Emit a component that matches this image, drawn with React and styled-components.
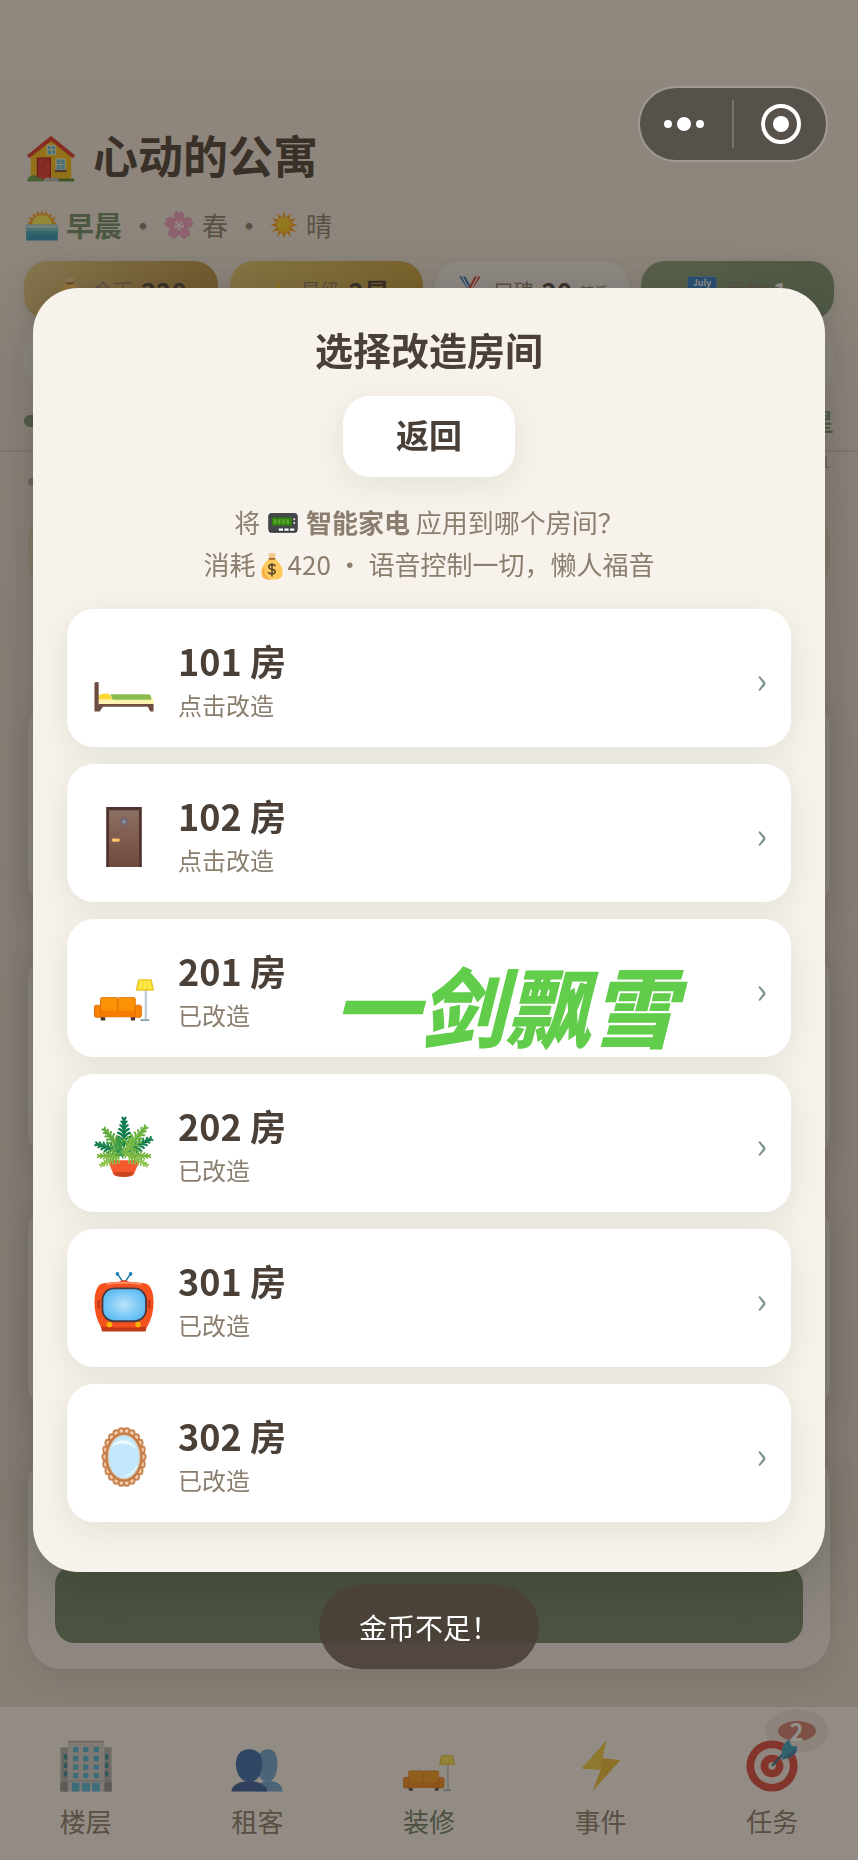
import React from 'react'
import styled, { createGlobalStyle, css } from 'styled-components'

const rooms = [
  { name: '101 房', status: '点击改造', icon: 'bed' },
  { name: '102 房', status: '点击改造', icon: 'door' },
  { name: '201 房', status: '已改造', icon: 'sofa', mark: '一剑飘雪' },
  { name: '202 房', status: '已改造', icon: 'plant' },
  { name: '301 房', status: '已改造', icon: 'tv' },
  { name: '302 房', status: '已改造', icon: 'mirror' },
]

const stats = [
  { icon: 'money', label: '金币', value: '320', tone: 'gold' },
  { icon: 'star', label: '星级', value: '2星', tone: 'yellow' },
  { icon: 'medal', label: '口碑', value: '20', note: '较低', tone: 'white' },
  { icon: 'calendar', label: '周数', value: '1', tone: 'green' },
]

const tabs = [
  { icon: 'building', label: '楼层' },
  { icon: 'people', label: '租客' },
  { icon: 'sofa', label: '装修', active: true },
  { icon: 'bolt', label: '事件' },
  { icon: 'target', label: '任务', badge: 2 },
]

/**
 * Icons
 */

const range = (n) => Array.from({ length: n }, (_, i) => i)

// one fern leaf, growing upwards from 0,0
const Frond = ({ x, y, angle, size, color }) => (
  <g
    transform={`translate(${x} ${y}) rotate(${angle}) scale(${size})`}
    stroke={color}
    strokeLinecap="round"
    fill="none"
  >
    <path d="M0 0V-54" strokeWidth="3" />
    {range(7).map((i) => (
      <path
        key={i}
        d={`M${i * 2 - 15} ${-14 - i * 7}Q${i - 7} ${-13 - i * 7} 0 ${-5 - i * 7}Q${7 - i} ${-13 - i * 7} ${15 - i * 2} ${-14 - i * 7}`}
        strokeWidth="4"
      />
    ))}
  </g>
)

const drawings = {
  house: (
    <>
      <path d="M10 56 64 12l54 44v66H10z" fill="#fcc21b" />
      <path d="M64 2 0 54l6 8 58-46 58 46 6-8z" fill="#e53b2e" />
      <path d="M26 60h38v60H26z" fill="#b71c1c" />
      <path d="M30 64h30v56H30z" fill="#e53935" />
      <circle cx="56" cy="86" r="2" fill="#fcc21b" />
      <path d="M52 26h26v28H52z" fill="#fff3b0" />
      <path d="M55 29h9v9h-9zM67 29h8v9h-8zM55 41h9v10h-9zM67 41h8v10h-8z" fill="#5fc3e8" />
      <path d="M76 62h28v32H76z" fill="#fff3b0" />
      <path d="M79 65h10v12H79zM91 65h10v12H91zM79 80h10v12H79zM91 80h10v12H91z" fill="#5fc3e8" />
      <path d="M74 93h32v6H74z" fill="#795548" />
      <path d="M1 124c0-16 14-22 28-12 10 2 14 6 16 12z" fill="#6aa34d" />
      <path d="M48 114h34l6 10H42z" fill="#bdbdbd" />
      <path d="M82 116h44v8H86z" fill="#558b2f" />
    </>
  ),
  sunrise: (
    <>
      <path d="M64 4l7 18 13-15 2 20 17-10-4 19 20-3-11 17 18 3-14 12H16L4 53l17-3L9 33l20 3-4-19 17 10 2-20 13 15z" fill="#f9a825" />
      <path d="M22 66a42 42 0 0184 0z" fill="#ffee58" />
      <path d="M1 62h126v64H1z" fill="#2698bd" />
      <path d="M1 62h126v14H1z" fill="#b9e0dd" />
      <path d="M1 76h126v14H1z" fill="#6fc7d0" />
      <path d="M1 90h126v14H1z" fill="#3faac6" />
    </>
  ),
  blossom: (
    <>
      {range(5).map((i) => (
        <path
          key={i}
          transform={`rotate(${i * 72} 64 66)`}
          d="M64 64C36 42 38 14 56 5l8 8 8-8c18 9 20 37-8 59z"
          fill="#f5a3c7"
          stroke="#e48bb5"
          strokeWidth="2"
        />
      ))}
      <circle cx="64" cy="66" r="22" fill="#fbd8e8" />
      <path d="M64 66V38M64 66l27-9M64 66l17 23M64 66 47 89M64 66l-27-9" stroke="#f06292" strokeWidth="3" />
      <circle cx="64" cy="66" r="9" fill="#fff0f6" />
    </>
  ),
  sun: (
    <>
      {range(12).map((i) => (
        <path key={i} transform={`rotate(${i * 30} 64 64)`} d="M54 34 64 0l10 34z" fill="#f9a01b" />
      ))}
      <circle cx="64" cy="64" r="35" fill="#fcc21b" />
      <circle cx="60" cy="58" r="27" fill="#ffd429" />
    </>
  ),
  money: (
    <>
      <path d="M46 6c6 5 12-5 18 0s12-5 18 0l-6 26H52z" fill="#f5c98a" />
      <path d="M50 32h28c30 24 40 52 32 76-6 16-22 18-46 18s-40-2-46-18c-8-24 2-52 32-76z" fill="#ffca5c" />
      <path d="M30 62c-12 20-14 42-6 52 8 10 24 12 40 12-24-8-40-28-34-64z" fill="#f7ad48" />
      <path d="M49 27h30v9H49z" fill="#a5722d" />
      <path d="M80 64c-6-8-30-10-31 4 0 14 31 8 30 22-2 14-28 12-33 2M64 50v62" stroke="#5d4a2e" strokeWidth="7" fill="none" />
    </>
  ),
  star: <path d="M64 14l9 42 48 0-37 29 10 41-30-23-30 23 10-41L7 56h48z" fill="#f5c518" />,
  medal: (
    <>
      <path d="M18 2h26l32 58H56z" fill="#2f7cc0" />
      <path d="M28 2h6l30 56h-6z" fill="#fff" />
      <path d="M110 2H84L52 60h20z" fill="#d6452f" />
      <path d="M100 2h-6L66 56h6z" fill="#fff" />
      <circle cx="64" cy="90" r="34" fill="#fcc21b" />
    </>
  ),
  calendar: (
    <>
      <rect x="2" y="2" width="124" height="124" rx="10" fill="#eceff1" />
      <path d="M12 2h104q10 0 10 10v44H2V12Q2 2 12 2z" fill="#2a80d2" />
      <text x="64" y="42" fontSize="38" fontWeight="700" textAnchor="middle" fill="#fff">
        July
      </text>
    </>
  ),
  pager: (
    <>
      <rect x="2" y="22" width="124" height="84" rx="14" fill="#2c2d2f" />
      <rect x="2" y="22" width="124" height="78" rx="14" fill="#434649" />
      <path d="M16 40h86v36H16z" fill="#2f7d12" />
      <path d="M24 48h12v20H24zM42 48h12v20H42zM60 48h12v20H60zM78 48h12v20H78z" fill="#57a62b" />
      <path d="M46 87h18v10H46zM70 87h18v10H70zM94 87h18v10H94z" fill="#fff" />
      <circle cx="112" cy="48" r="4" fill="#eee" />
      <circle cx="112" cy="64" r="4" fill="#eee" />
    </>
  ),
  bed: (
    <>
      <path d="M10 98h117v14H10z" fill="#fff3b0" />
      <path d="M10 92q14-6 24-1l6 10H10z" fill="#fdd835" />
      <path d="M35 90h80q7 0 7 7v5H40z" fill="#8bbd4e" />
      <path d="M10 111h116v6H10z" fill="#6d4c41" />
      <path d="M1 67q0-3 5-3t4 3v46h9v4l-7 10H1z" fill="#6d4c41" />
      <path d="M117 111h10v16h-7l-5-10z" fill="#6d4c41" />
    </>
  ),
  door: (
    <>
      <defs>
        <linearGradient id="doorPanel" x2="0" y2="1">
          <stop stopColor="#8d6e63" />
          <stop offset="1" stopColor="#6f4a3c" />
        </linearGradient>
      </defs>
      <path d="M26 0h76v128H26z" fill="#4e342e" />
      <path d="M32 7h64v121H32z" fill="url(#doorPanel)" />
      <circle cx="64" cy="31" r="9" fill="#79646a" />
      <circle cx="64" cy="31" r="4" fill="#8296aa" />
      <rect x="38" y="67" width="17" height="7" rx="3" fill="#ffc46b" />
    </>
  ),
  sofa: (
    <>
      <path d="M108 58h5v66h-5z" fill="#c3ccd1" />
      <path d="M99 122h19v4H99z" fill="#90a4ae" />
      <path d="M95 38h27l5 22H90z" fill="#fbe12f" stroke="#e0b62a" strokeWidth="2" />
      <path d="M102 41l-3 16M109 41v16M116 41l3 16" stroke="#fff176" strokeWidth="2" />
      <path d="M13 116h11v9H15zM78 116h11l-2 9h-8z" fill="#4e342e" />
      <rect x="14" y="76" width="37" height="34" rx="3" fill="#fb9104" stroke="#e06f00" strokeWidth="2" />
      <rect x="51" y="76" width="37" height="34" rx="3" fill="#fb9104" stroke="#e06f00" strokeWidth="2" />
      <path d="M12 104h78v14H12z" fill="#f57c00" />
      <rect x="1" y="92" width="13" height="26" rx="4" fill="#f78204" stroke="#e06f00" strokeWidth="2" />
      <rect x="88" y="92" width="13" height="26" rx="4" fill="#f78204" stroke="#e06f00" strokeWidth="2" />
    </>
  ),
  plant: (
    <>
      <Frond x={64} y={66} angle={0} size={1.15} color="#0c7a4c" />
      <Frond x={62} y={76} angle={-72} size={1.1} color="#16804f" />
      <Frond x={66} y={76} angle={62} size={1.15} color="#16804f" />
      <Frond x={60} y={72} angle={-40} size={1.1} color="#5daa3c" />
      <Frond x={68} y={72} angle={40} size={1.2} color="#6cb33f" />
      <path d="M30 92h68l-14 32q-20 6-42 0z" fill="#f4582c" />
      <path d="M42 118h42l-5 8q-16 4-32 0z" fill="#c94421" />
      <Frond x={58} y={80} angle={-118} size={0.9} color="#8bc34a" />
      <Frond x={70} y={80} angle={118} size={0.9} color="#8bc34a" />
      <Frond x={58} y={80} angle={-94} size={0.9} color="#76b53f" />
      <Frond x={70} y={80} angle={94} size={0.9} color="#76b53f" />
      <Frond x={62} y={88} angle={-14} size={0.8} color="#3b9a45" />
      <Frond x={66} y={88} angle={18} size={0.8} color="#7dbb45" />
    </>
  ),
  tv: (
    <>
      <defs>
        <radialGradient id="screen">
          <stop stopColor="#b9e4fb" />
          <stop offset="1" stopColor="#62bdf3" />
        </radialGradient>
      </defs>
      <path d="M50 4l11 16M78 4 67 20" stroke="#0d6f9f" strokeWidth="3" />
      <circle cx="50" cy="4" r="4" fill="#1580b5" />
      <circle cx="78" cy="4" r="4" fill="#1580b5" />
      <path d="M50 24q14-14 28 0z" fill="#d84a2b" />
      <path d="M14 112h100l-4 15H17z" fill="#c33a1b" />
      <path d="M20 24q44-8 88 0c16 3 19 26 19 42s-4 34-13 50q-50 5-100 0C5 100 1 82 1 66s3-39 19-42z" fill="#f4511e" />
      <path d="M26 26q38-6 76 0" stroke="#ff8a65" strokeWidth="4" fill="none" />
      <rect x="18" y="35" width="93" height="70" rx="25" fill="url(#screen)" stroke="#4b3a40" strokeWidth="4" />
      <path d="M7 60h6v18H7zM115 60h6v18h-6z" fill="#c33a1b" />
      <circle cx="33" cy="112" r="6" fill="#ffb300" />
      <circle cx="94" cy="112" r="6" fill="#ffb300" />
    </>
  ),
  mirror: (
    <>
      {range(22).map((i) => (
        <ellipse
          key={i}
          cx={64 + 40 * Math.cos((i * Math.PI) / 11)}
          cy={64 + 55 * Math.sin((i * Math.PI) / 11)}
          rx="6"
          ry="7"
          fill="#f3cfae"
          stroke="#c98250"
          strokeWidth="4"
        />
      ))}
      <ellipse cx="64" cy="64" rx="37" ry="50" fill="#c3e7fb" stroke="#c07d4a" strokeWidth="6" />
      <ellipse cx="64" cy="64" rx="34" ry="47" fill="none" stroke="#e9b78a" strokeWidth="2" />
      <path d="M38 42c8-18 40-20 52 4-12-12-36-14-52-4z" fill="#eef9ff" />
      <path d="M94 78c-4 20-22 32-40 28 18-2 30-10 40-28z" fill="#e3f5fe" />
    </>
  ),
  building: (
    <>
      <path d="M1 18h22v109H1zM106 18h21v109h-21z" fill="#a9a9a9" />
      <path d="M1 104h22v23H1zM106 104h21v23h-21z" fill="#858585" />
      {[35, 56, 77].map((y) => (
        <path key={y} d={`M9 ${y}h9v13H9zM111 ${y}h8v13h-8z`} fill="#1c8091" />
      ))}
      <path d="M19 2h90v125H19z" fill="#d5d0ce" />
      <path d="M19 2h90v4H19zM19 99h90v4H19z" fill="#b0aaa8" />
      {[17, 39, 60, 81].map((y) => (
        <path key={y} d={`M32 ${y}h13v13H32zM57 ${y}h13v13H57zM83 ${y}h13v13H83z`} fill="#3cb2dc" />
      ))}
      <path d="M29 105h19v22H29zM54 105h20v22H54zM79 105h19v22H79z" fill="#3cb2dc" />
    </>
  ),
  people: (
    <>
      <path d="M58 127c0-16 16-26 34-26s35 8 35 26z" fill="#5c9ed6" />
      <path d="M64 60c0-20 8-37 27-37s23 17 23 37-7 43-25 43-25-23-25-43z" fill="#5c9ed6" />
      <path d="M1 127c0-17 22-26 44-26s44 9 44 26z" fill="#1a4d94" />
      <path d="M12 58c0-21 12-35 33-35s32 14 32 35-9 45-32 45-33-24-33-45z" fill="#1d5ba6" />
    </>
  ),
  bolt: (
    <>
      <path d="M77 2 17 70l46 3-19 52 68-76-45-4z" fill="#f0b91c" />
      <path d="M77 2 17 70l46 3 4-28z" fill="#f7cf2e" />
    </>
  ),
  target: (
    <>
      <circle cx="64" cy="64" r="63" fill="#da3329" />
      <circle cx="64" cy="64" r="44" fill="#f5ebe6" />
      <circle cx="64" cy="64" r="28" fill="#da3329" />
      <circle cx="64" cy="64" r="9" fill="#f5ebe6" />
      <path d="M64 64l32-36" stroke="#0c6d86" strokeWidth="5" />
      <path d="M88 34C88 14 96 4 106 0l6 14 14 2c2 14-10 30-38 32z" fill="#1c9fc0" />
      <path d="M90 44l34-24c2 14-10 24-34 24z" fill="#2a6fa8" />
    </>
  ),
}

const Icon = ({ name, size }) => (
  <IconSvg $size={size} viewBox="0 0 128 128" aria-hidden="true">
    {drawings[name]}
  </IconSvg>
)

/**
 * Components
 */

const Room = ({ room }) => (
  <RoomCard type="button">
    <Icon name={room.icon} size={60} />
    <RoomInfo>
      <RoomName>{room.name}</RoomName>
      <RoomStatus>{room.status}</RoomStatus>
    </RoomInfo>
    <Chevron>›</Chevron>
    {room.mark && <Watermark>{room.mark}</Watermark>}
  </RoomCard>
)

const Tab = ({ tab }) => (
  <TabButton type="button" $active={tab.active}>
    <TabIcon>
      {tab.badge && (
        <BadgeHalo>
          <Badge>{tab.badge}</Badge>
        </BadgeHalo>
      )}
      <Icon name={tab.icon} size={52} />
    </TabIcon>
    {tab.label}
  </TabButton>
)

const App = () => {
  return (
    <>
      <GlobalStyle />
      <Page>
        <Header>
          <Title>
            <Icon name="house" size={48} />
            心动的公寓
          </Title>
          <Weather>
            <Icon name="sunrise" size={32} />
            <strong>早晨</strong>
            <Dot>·</Dot>
            <Icon name="blossom" size={30} />
            <span>春</span>
            <Dot>·</Dot>
            <Icon name="sun" size={28} />
            <span>晴</span>
          </Weather>
          <Stats>
            {stats.map((item) => (
              <Stat key={item.label} $tone={item.tone}>
                <Icon name={item.icon} size={30} />
                <span>{item.label}</span>
                <b>{item.value}</b>
                {item.note && <small>{item.note}</small>}
              </Stat>
            ))}
          </Stats>
          <Notice />
          <Progress>
            <ProgressTrack>
              <ProgressFill />
            </ProgressTrack>
            3星
          </Progress>
        </Header>
        <Content>
          <Hint>0/1</Hint>
          <Bullet />
          <Tip />
          <Card />
          <Card />
          <Card />
          <Card>
            <ApplyButton type="button">选择房间改造</ApplyButton>
          </Card>
        </Content>
        <TabBar>
          {tabs.map((tab) => (
            <Tab key={tab.label} tab={tab} />
          ))}
        </TabBar>
      </Page>

      <Overlay>
        <Modal role="dialog" aria-labelledby="modal-title">
          <ModalTitle id="modal-title">选择改造房间</ModalTitle>
          <BackButton type="button">返回</BackButton>
          <Description>
            <p>
              将 <Icon name="pager" size={30} /> <strong>智能家电</strong> 应用到哪个房间？
            </p>
            <p>
              消耗
              <Icon name="money" size={28} />
              420 · 语音控制一切，懒人福音
            </p>
          </Description>
          <RoomList>
            {rooms.map((room) => (
              <Room key={room.name} room={room} />
            ))}
          </RoomList>
        </Modal>
      </Overlay>

      <Toast role="status">金币不足！</Toast>

      <Capsule>
        <CapsuleButton type="button" aria-label="更多">
          <svg width="46" height="42" viewBox="0 0 46 42" fill="#fff">
            <circle cx="5" cy="21" r="4" />
            <circle cx="21" cy="21" r="7" />
            <circle cx="37" cy="21" r="4" />
          </svg>
        </CapsuleButton>
        <CapsuleDivider />
        <CapsuleButton type="button" aria-label="关闭">
          <svg width="42" height="42" viewBox="0 0 42 42">
            <circle cx="22" cy="21" r="18" fill="none" stroke="#fff" strokeWidth="4" />
            <circle cx="22" cy="21" r="8" fill="#fff" />
          </svg>
        </CapsuleButton>
      </Capsule>
    </>
  )
}

export default App

/**
 * Styles
 */

const GlobalStyle = createGlobalStyle`
  * {
    box-sizing: border-box;
  }

  body {
    margin: 0;
    color: #4a4038;
    font-family: 'Noto Sans CJK SC', 'Noto Sans', sans-serif;
  }

  button {
    border: 0;
    padding: 0;
    font-family: inherit;
    color: inherit;
    cursor: pointer;
  }

  h1, h2, p {
    margin: 0;
  }
`

const IconSvg = styled.svg`
  width: ${({ $size }) => $size}px;
  height: ${({ $size }) => $size}px;
  flex: none;
  overflow: visible;
`

const Page = styled.div`
  display: flex;
  flex-direction: column;
  min-height: 100vh;
  background: linear-gradient(#f6efe4, #ede4db 40%, #e4dad1);
`

const Header = styled.header`
  padding: 122px 24px 14px;
  border-bottom: 2px solid rgba(74, 64, 56, 0.12);
`

const Title = styled.h1`
  display: flex;
  align-items: center;
  gap: 18px;
  margin-bottom: 17px;
  padding-left: 3px;
  font-size: 45px;
  line-height: 66px;

  svg {
    margin-top: 8px;
  }
`

const Weather = styled.div`
  display: flex;
  align-items: center;
  gap: 8px;
  margin-bottom: 16px;
  padding-left: 2px;
  color: #8b7e6e;
  font-size: 26px;
  line-height: 40px;

  strong {
    color: #6f8f69;
    font-size: 28px;
  }
`

const Dot = styled.span`
  width: 26px;
  text-align: center;
  font-weight: 700;
`

const Stats = styled.div`
  display: grid;
  grid-template-columns: repeat(4, 1fr);
  gap: 12px;
`

const tones = {
  gold: 'linear-gradient(135deg, #e6d08a, #b58836)',
  yellow: 'linear-gradient(135deg, #e6cd72, #c49d36)',
  white: '#f6f2f0',
  green: 'linear-gradient(135deg, #8aa37e, #76916f)',
}

const Stat = styled.div`
  display: flex;
  align-items: center;
  justify-content: center;
  gap: 8px;
  height: 59px;
  border-radius: 24px;
  background: ${({ $tone }) => tones[$tone]};
  box-shadow: 0 4px 16px rgba(90, 96, 70, 0.12);
  color: #8b7e6e;
  font-size: 20px;

  b {
    color: ${({ $tone }) => ($tone === 'green' ? '#fff' : '#4a4038')};
    font-size: 26px;
  }

  small {
    font-size: 14px;
  }
`

const Notice = styled.div`
  height: 55px;
  margin-top: 15px;
  border-radius: 24px;
  background: #f6f2ee;
`

const Progress = styled.div`
  display: flex;
  align-items: center;
  gap: 16px;
  margin-top: 16px;
  color: #7d9b76;
  font-size: 24px;
  font-weight: 700;
  line-height: 30px;
`

const ProgressTrack = styled.div`
  flex: 1;
  height: 12px;
  border-radius: 6px;
  background: #e4dcd0;
`

const ProgressFill = styled.div`
  width: 30%;
  height: 100%;
  border-radius: 6px;
  background: #7d9b76;
`

const Content = styled.main`
  display: flex;
  flex-direction: column;
  padding: 0 28px 38px;
`

const Hint = styled.div`
  height: 22px;
  color: #b3a899;
  font-size: 16px;
  line-height: 18px;
  text-align: right;
`

const Bullet = styled.div`
  width: 10px;
  height: 8px;
  margin: 4px 0 31px;
  border-radius: 4px;
  background: #b5aa9d;
`

const Tip = styled.div`
  height: 68px;
  margin-bottom: 76px;
  border-radius: 20px;
  background: #e6dbc2;
`

const Card = styled.section`
  display: flex;
  flex-direction: column;
  justify-content: flex-end;
  height: 218px;
  margin-top: 34px;
  padding: 26px 27px;
  border-radius: 34px;
  background: #f6f1ed;
  box-shadow: 0 6px 30px rgba(80, 84, 66, 0.16);
`

const ApplyButton = styled.button`
  height: 78px;
  border-radius: 20px;
  background: #72896b;
  color: #b58a78;
  font-size: 26px;
`

const TabBar = styled.nav`
  display: flex;
  height: 153px;
  margin-top: auto;
  background: #fcf8f3;
`

const TabButton = styled.button`
  display: flex;
  flex: 1;
  flex-direction: column;
  align-items: center;
  padding-top: 33px;
  background: none;
  color: ${({ $active }) => ($active ? '#6c8266' : '#8b7e6e')};
  font-size: 26px;
  line-height: 58px;
`

const TabIcon = styled.span`
  display: flex;
  position: relative;
  isolation: isolate;
  opacity: 0.88;
`

const BadgeHalo = styled.span`
  position: absolute;
  z-index: -1;
  top: -31px;
  left: 19px;
  display: flex;
  align-items: center;
  justify-content: center;
  width: 63px;
  height: 44px;
  border-radius: 50%;
  background: rgba(220, 195, 192, 0.35);
`

const Badge = styled.span`
  width: 38px;
  height: 20px;
  border-radius: 50%;
  background: #cf6f61;
  color: #fff;
  font-size: 24px;
  font-weight: 700;
  line-height: 20px;
`

const Overlay = styled.div`
  position: fixed;
  inset: 0;
  display: flex;
  align-items: center;
  justify-content: center;
  padding: 0 33px;
  background: rgba(40, 32, 24, 0.5);
`

const Modal = styled.div`
  display: flex;
  flex: 1;
  flex-direction: column;
  align-items: center;
  padding: 33px 34px 50px;
  border-radius: 45px;
  background: #f7f2eb;
  box-shadow: 0 16px 60px rgba(40, 40, 34, 0.3);
`

const ModalTitle = styled.h2`
  font-size: 38px;
  line-height: 56px;
`

const BackButton = styled.button`
  width: 172px;
  height: 81px;
  margin: 19px 0 24px;
  padding-bottom: 6px;
  border-radius: 27px;
  background: #fff;
  box-shadow: 0 8px 32px rgba(100, 120, 80, 0.12);
  font-size: 33px;
  font-weight: 700;
`

const Description = styled.div`
  margin-bottom: 24px;
  color: #8b7e6e;
  font-size: 26px;
  line-height: 42px;
  text-align: center;

  svg {
    margin: 0 2px;
    vertical-align: -5px;
  }
`

const RoomList = styled.div`
  display: flex;
  flex-direction: column;
  align-self: stretch;
  gap: 17px;
`

const RoomCard = styled.button`
  position: relative;
  display: flex;
  align-items: center;
  gap: 24px;
  height: 138px;
  padding: 8px 24px 0 27px;
  border-radius: 27px;
  background: #fff;
  box-shadow: 0 8px 32px rgba(100, 120, 90, 0.13);
  text-align: left;
`

const RoomInfo = styled.span`
  display: flex;
  flex: 1;
  flex-direction: column;
  padding-bottom: 8px;
`

const RoomName = styled.span`
  font-size: 36px;
  font-weight: 700;
  line-height: 54px;
`

const RoomStatus = styled.span`
  color: #8b7e6e;
  font-size: 24px;
  line-height: 36px;
`

const Chevron = styled.span`
  padding-bottom: 8px;
  color: #7f9490;
  font-size: 36px;
`

const Watermark = styled.span`
  position: absolute;
  top: 42px;
  left: 266px;
  color: #62cc4b;
  font-size: 86px;
  font-style: italic;
  font-weight: 900;
  line-height: 86px;
  white-space: nowrap;
  pointer-events: none;
`

const floating = css`
  position: fixed;
  display: flex;
  align-items: center;
`

const Toast = styled.div`
  ${floating}
  bottom: 191px;
  left: 50%;
  height: 84px;
  padding: 0 40px;
  border-radius: 42px;
  background: rgba(74, 64, 56, 0.9);
  color: #fff;
  font-size: 28px;
  white-space: nowrap;
  transform: translateX(-50%);
`

const Capsule = styled.div`
  ${floating}
  top: 86px;
  right: 30px;
  width: 190px;
  height: 76px;
  border: 2px solid #a09b93;
  border-radius: 38px;
  background: #56524b;
`

const CapsuleButton = styled.button`
  display: flex;
  flex: 1;
  align-items: center;
  justify-content: center;
  background: none;
`

const CapsuleDivider = styled.span`
  width: 2px;
  height: 48px;
  background: #77736d;
`
